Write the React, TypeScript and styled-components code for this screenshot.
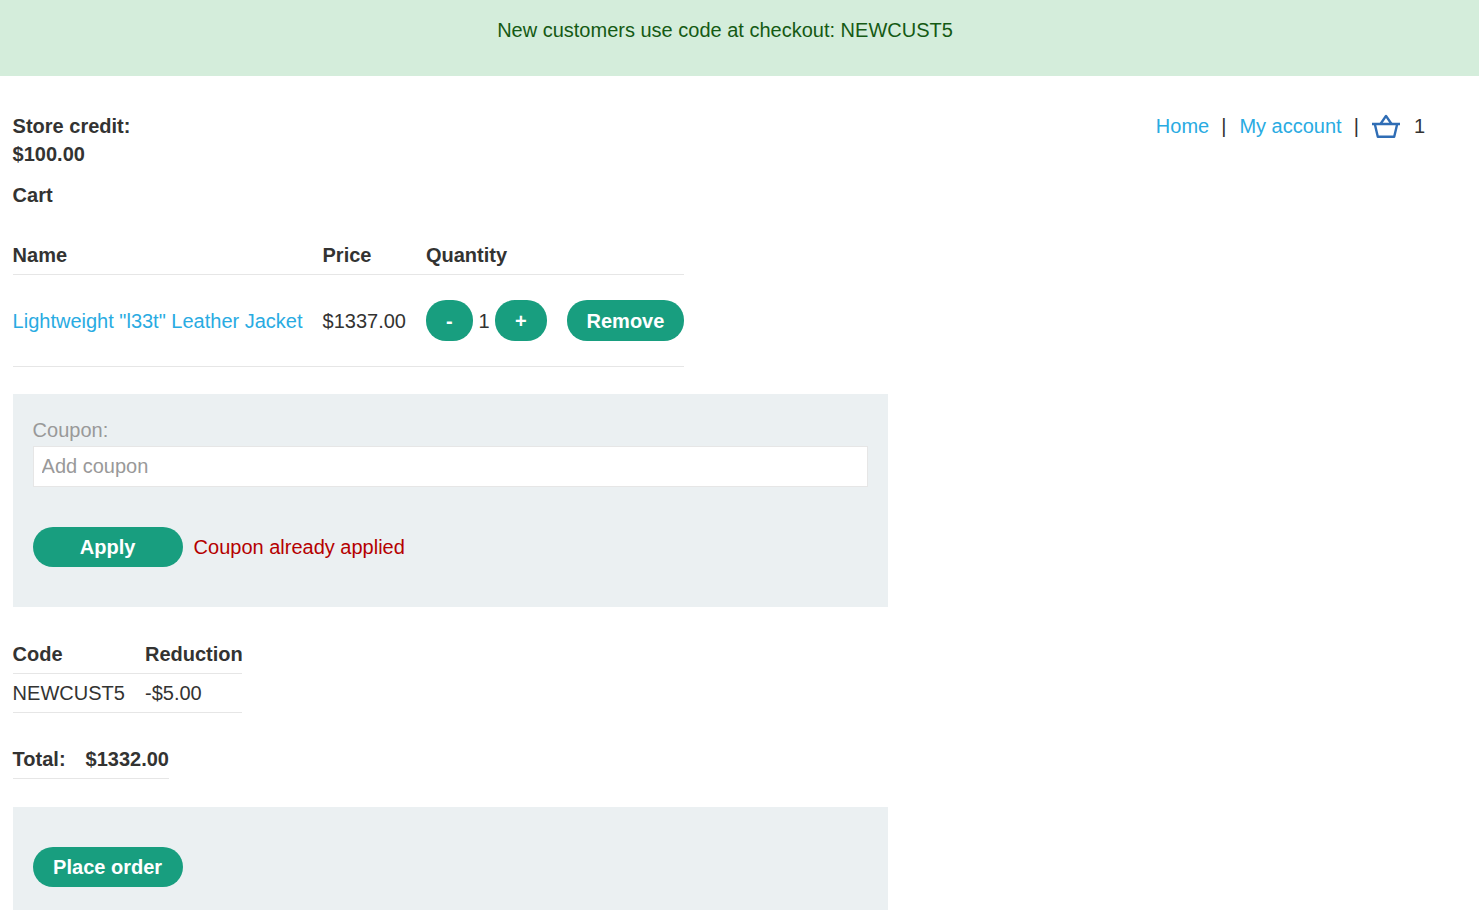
import styled, { createGlobalStyle } from "styled-components";

const GlobalStyle = createGlobalStyle`
  html, body {
    margin: 0;
    padding: 0;
    background: #fff;
    color: #333332;
    font-family: "Liberation Sans", Arial, sans-serif;
    font-size: 20px;
    line-height: 28px;
    overflow: hidden;
  }
`;

function BasketIcon() {
  return (
    <svg width="28" height="24" viewBox="0 0 28 24" fill="none" stroke="#2f6db5" strokeWidth="2.4" strokeLinejoin="round">
      <path d="M0.5 10h27" strokeLinecap="round" />
      <path d="M2.800 10l3 12.800h16.400l3-12.800" />
      <path d="M8.500 10L14 1.900 19.500 10" />
    </svg>
  );
}

function App() {
  return (
    <Page>
      <GlobalStyle />
      <Banner>New customers use code at checkout: NEWCUST5</Banner>
      <Main>
        <TopRow>
          <Credit>
            Store credit:
            <br />
            $100.00
          </Credit>
          <Nav>
            <Link href="#">Home</Link>
            <Sep>|</Sep>
            <Link href="#">My account</Link>
            <Sep>|</Sep>
            <BasketIcon />
            <CartCount>1</CartCount>
          </Nav>
        </TopRow>
        <Heading>Cart</Heading>
        <CartTable>
          <thead>
            <tr>
              <CartHead>Name</CartHead>
              <CartHead>Price</CartHead>
              <CartHead>Quantity</CartHead>
              <CartHead />
            </tr>
          </thead>
          <tbody>
            <tr>
              <CartCell>
                <Link href="#">Lightweight "l33t" Leather Jacket</Link>
              </CartCell>
              <CartCell>$1337.00</CartCell>
              <CartCell>
                <Quantity>
                  <RoundButton $width={47}>-</RoundButton>
                  <QuantityValue>1</QuantityValue>
                  <RoundButton $width={52}>+</RoundButton>
                </Quantity>
              </CartCell>
              <CartCell>
                <RoundButton $width={117}>Remove</RoundButton>
              </CartCell>
            </tr>
          </tbody>
        </CartTable>
        <CouponPanel>
          <CouponLabel htmlFor="coupon">Coupon:</CouponLabel>
          <CouponInput id="coupon" placeholder="Add coupon" />
          <ApplyRow>
            <PanelButton>Apply</PanelButton>
            <ErrorText>Coupon already applied</ErrorText>
          </ApplyRow>
        </CouponPanel>
        <CodeTable>
          <thead>
            <tr>
              <CodeHead>Code</CodeHead>
              <CodeHead>Reduction</CodeHead>
            </tr>
          </thead>
          <tbody>
            <tr>
              <CodeCell>NEWCUST5</CodeCell>
              <CodeCell>-$5.00</CodeCell>
            </tr>
          </tbody>
        </CodeTable>
        <Total>
          <span>Total:</span>
          <span>$1332.00</span>
        </Total>
        <OrderPanel>
          <PanelButton>Place order</PanelButton>
        </OrderPanel>
      </Main>
    </Page>
  );
}

export default App;

const Page = styled.div`
  height: 910px;
  overflow: hidden;
`;

const Banner = styled.div`
  height: 76px;
  box-sizing: border-box;
  padding: 16px 29px 0 0;
  background: #d4eddb;
  color: #155a14;
  text-align: center;
`;

const Main = styled.main`
  padding: 36px 0 0 12.6px;
`;

const TopRow = styled.div`
  display: flex;
  justify-content: space-between;
  align-items: flex-start;
  padding-right: 54px;
`;

const Credit = styled.div`
  font-weight: 700;
`;

const Nav = styled.nav`
  display: flex;
  align-items: center;
  height: 28px;
`;

const Link = styled.a`
  color: #29abe2;
  text-decoration: none;
`;

const Sep = styled.span`
  margin: 0 13px 0 12px;
`;

const CartCount = styled.span`
  margin-left: 14px;
`;

const Heading = styled.div`
  margin-top: 13px;
  font-weight: 700;
`;

const CartTable = styled.table`
  margin-top: 20px;
  border-collapse: collapse;
`;

const CartHead = styled.th`
  padding: 12px 20px 5px 0;
  border-bottom: 1px solid #e6e6e6;
  text-align: left;
  font-weight: 700;
  &:last-child {
    padding-right: 0;
  }
`;

const CartCell = styled.td`
  padding: 25px 20px 25px 0;
  border-bottom: 1px solid #e6e6e6;
  &:last-child {
    padding-right: 0;
  }
`;

const Quantity = styled.div`
  display: flex;
  align-items: center;
`;

const QuantityValue = styled.span`
  width: 22px;
  text-align: center;
`;

const RoundButton = styled.button<{ $width: number }>`
  display: block;
  width: ${(p) => p.$width}px;
  height: 41px;
  padding: 0;
  border: 0;
  border-radius: 20px;
  background: #189e7f;
  color: #fff;
  font: 700 20px/28px "Liberation Sans", Arial, sans-serif;
`;

const CouponPanel = styled.div`
  width: 875px;
  height: 213px;
  box-sizing: border-box;
  margin-top: 27px;
  padding: 22px 20px 0;
  background: #ebf0f2;
`;

const CouponLabel = styled.label`
  display: block;
  color: #999;
`;

const CouponInput = styled.input`
  display: block;
  width: 100%;
  height: 41px;
  box-sizing: border-box;
  margin-top: 2px;
  padding: 0 8px;
  border: 1px solid #e6e6e6;
  outline: 0;
  background: #fff;
  font: 20px "Liberation Sans", Arial, sans-serif;
  &::placeholder {
    color: #999;
    opacity: 1;
  }
`;

const ApplyRow = styled.div`
  display: flex;
  align-items: center;
  gap: 11px;
  margin-top: 40px;
`;

const PanelButton = styled.button`
  width: 150px;
  height: 40px;
  padding: 0;
  border: 0;
  border-radius: 20px;
  background: #189e7f;
  color: #fff;
  font: 700 20px/28px "Liberation Sans", Arial, sans-serif;
`;

const ErrorText = styled.span`
  color: #b50000;
`;

const CodeTable = styled.table`
  width: 229.4px;
  margin-top: 26px;
  border-collapse: collapse;
  table-layout: fixed;
`;

const CodeHead = styled.th`
  width: 112.4px;
  padding: 7px 20px 5px 0;
  border-bottom: 1px solid #e6e6e6;
  text-align: left;
  font-weight: 700;
  white-space: nowrap;
  &:last-child {
    width: auto;
    padding-right: 0;
  }
`;

const CodeCell = styled.td`
  padding: 5px 20px 5px 0;
  border-bottom: 1px solid #e6e6e6;
  &:last-child {
    padding-right: 0;
  }
`;

const Total = styled.div`
  display: inline-flex;
  gap: 20px;
  margin-top: 32px;
  padding-bottom: 5px;
  border-bottom: 1px solid #e6e6e6;
  font-weight: 700;
`;

const OrderPanel = styled.div`
  width: 875px;
  height: 103px;
  box-sizing: border-box;
  margin-top: 28px;
  padding: 40px 20px 0;
  background: #ebf0f2;
`;
